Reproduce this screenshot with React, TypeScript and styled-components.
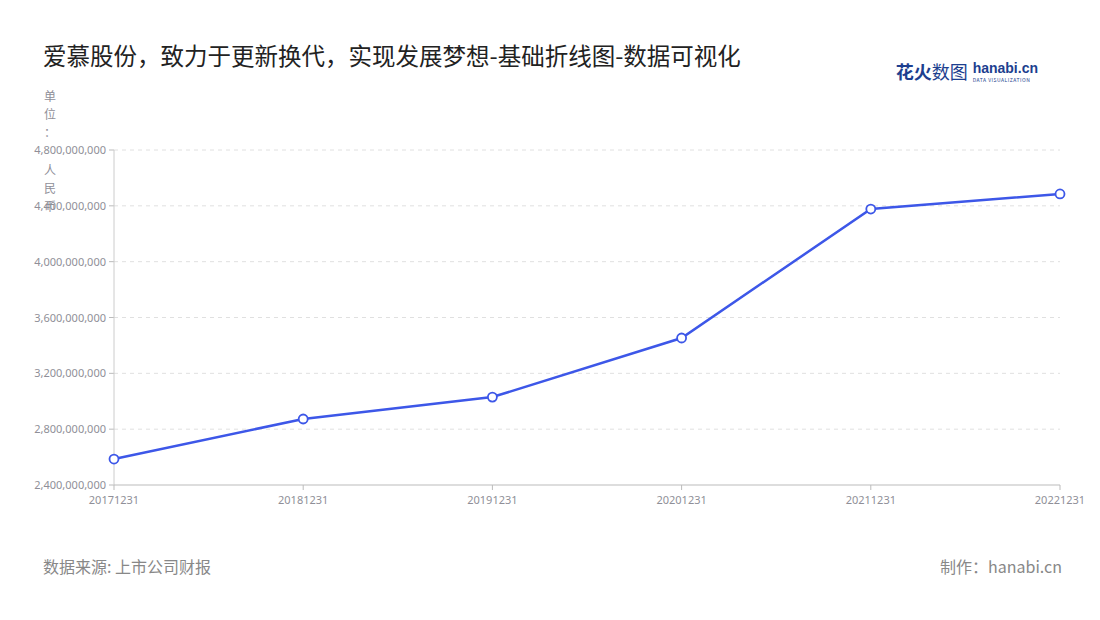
import styled, { createGlobalStyle } from "styled-components";

const GlobalStyle = createGlobalStyle`
  body {
    margin: 0;
    background: #ffffff;
    font-family: "Noto Sans CJK SC", "Noto Sans", sans-serif;
  }
`;

const TOP = 80; // svg top offset in page
const X0 = 114;
const X1 = 1060;
const Y_MAX = 150;
const Y_MIN = 485;

const data = [
  { label: "20171231", value: 2.586 },
  { label: "20181231", value: 2.873 },
  { label: "20191231", value: 3.03 },
  { label: "20201231", value: 3.453 },
  { label: "20211231", value: 4.377 },
  { label: "20221231", value: 4.485 },
];

const ticks = [2.4, 2.8, 3.2, 3.6, 4.0, 4.4, 4.8];

const yOf = (v: number) => Y_MIN - ((v - 2.4) / 2.4) * (Y_MIN - Y_MAX) - TOP;
const xOf = (i: number) => X0 + ((X1 - X0) / (data.length - 1)) * i;

const fmt = (v: number) => Math.round(v * 1e9).toLocaleString("en-US");

function App() {
  const pts = data.map((d, i) => `${xOf(i)},${yOf(d.value)}`).join(" ");
  const unit = ["单", "位", "：", "人", "民", "币"];
  const unitY = [96, 114, 132, 170, 188, 206];

  return (
    <Page>
      <GlobalStyle />
      <Header>
        <Title>爱慕股份，致力于更新换代，实现发展梦想-基础折线图-数据可视化</Title>
        <Logo>
          <LogoCn>花火<span>数图</span></LogoCn>
          <LogoEn>
            <b>hanabi.cn</b>
            <small>DATA VISUALIZATION</small>
          </LogoEn>
        </Logo>
      </Header>
      <Chart width={1100} height={440} viewBox="0 0 1100 440">
        {ticks.map((t) => (
          <g key={t}>
            {t > 2.4 && (
              <line
                x1={X0}
                x2={X1}
                y1={yOf(t)}
                y2={yOf(t)}
                stroke="#e0e0e0"
                strokeDasharray="4 4"
              />
            )}
            <line x1={X0 - 5} x2={X0} y1={yOf(t)} y2={yOf(t)} stroke="#bbb" />
            <text
              x={X0 - 8}
              y={yOf(t) + 4}
              textAnchor="end"
              fontSize={11}
              fill="#8f8f98"
            >
              {fmt(t)}
            </text>
          </g>
        ))}
        {unit.map((c, i) => (
          <text
            key={i}
            x={50}
            y={unitY[i] - TOP + 5}
            textAnchor="middle"
            fontSize={12}
            fill="#8f8f98"
          >
            {c}
          </text>
        ))}
        <line x1={X0} x2={X0} y1={Y_MAX - TOP} y2={Y_MIN - TOP} stroke="#ccc" />
        <line x1={X0} x2={X1} y1={Y_MIN - TOP} y2={Y_MIN - TOP} stroke="#bbb" />
        {data.map((d, i) => (
          <g key={d.label}>
            <line x1={xOf(i)} x2={xOf(i)} y1={Y_MIN - TOP} y2={Y_MIN - TOP + 5} stroke="#bbb" />
            <text
              x={xOf(i)}
              y={Y_MIN - TOP + 19}
              textAnchor="middle"
              fontSize={11}
              fill="#8f8f98"
            >
              {d.label}
            </text>
          </g>
        ))}
        <polyline points={pts} fill="none" stroke="#3d57e8" strokeWidth={2.5} />
        {data.map((d, i) => (
          <circle
            key={i}
            cx={xOf(i)}
            cy={yOf(d.value)}
            r={4.5}
            fill="#fff"
            stroke="#3d57e8"
            strokeWidth={1.8}
          />
        ))}
      </Chart>
      <Footer>
        <span>数据来源: 上市公司财报</span>
        <span>制作：hanabi.cn</span>
      </Footer>
    </Page>
  );
}

const Page = styled.div`
  width: 1100px;
  height: 620px;
  overflow: hidden;
`;

const Header = styled.div`
  height: 80px;
  display: flex;
  justify-content: space-between;
  align-items: flex-start;
  padding: 0 62px 0 43px;
  box-sizing: border-box;
`;

const Title = styled.div`
  margin-top: 40px;
  font-size: 23.5px;
  color: #222;
  line-height: 30px;
`;

const Logo = styled.div`
  margin-top: 58px;
  display: flex;
  align-items: center;
  gap: 5px;
`;

const LogoCn = styled.div`
  font-size: 18px;
  font-weight: 700;
  color: #1d3f8f;
  span {
    font-weight: 400;
  }
`;

const LogoEn = styled.div`
  display: flex;
  flex-direction: column;
  line-height: 1;
  color: #1d3f8f;
  b {
    font-family: "Liberation Sans", sans-serif;
    font-size: 14px;
  }
  small {
    font-size: 5px;
    letter-spacing: 0.5px;
    margin-top: 2px;
  }
`;

const Chart = styled.svg`
  display: block;
  font-family: "Noto Sans", "Noto Sans CJK SC", sans-serif;
`;

const Footer = styled.div`
  margin-top: 34px;
  display: flex;
  justify-content: space-between;
  padding: 0 38px 0 43px;
  font-size: 16px;
  color: #888;
`;

export default App;
